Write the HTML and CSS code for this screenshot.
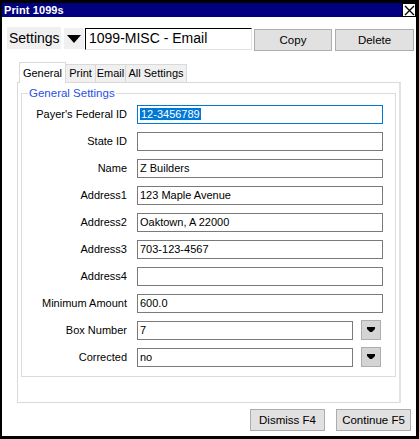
FILE: index.html
```html
<!DOCTYPE html>
<html>
<head>
<meta charset="utf-8">
<link rel="stylesheet" href="styles.css">
</head>
<body>
<div class="window">
  <div class="titlebar">
    <span class="title">Print 1099s</span>
    <span class="close"><svg width="11" height="11" viewBox="0 0 11 11"><path d="M1 1L10 10M10 1L1 10" stroke="#000" stroke-width="1.3"/></svg></span>
  </div>
  <div class="content">
    <div class="toprow">
      <span class="setlabel">Settings</span>
      <span class="arrowbtn"><svg width="14" height="8" viewBox="0 0 14 8"><path d="M0 0H14L7 8Z" fill="#000"/></svg></span>
      <span class="combo">1099-MISC - Email</span>
      <span class="btn copy">Copy</span>
      <span class="btn delete">Delete</span>
    </div>
    <div class="tabs">
      <span class="tab active t-general">General</span>
      <span class="tab t-print">Print</span>
      <span class="tab t-email">Email</span>
      <span class="tab t-all">All Settings</span>
    </div>
    <div class="panel">
      <fieldset class="group">
        <legend>General Settings</legend>
        <div class="rows">
          <label>Payer's Federal ID</label><div class="field focus"><span class="sel">12-3456789</span></div>
          <label>State ID</label><div class="field"></div>
          <label>Name</label><div class="field">Z Builders</div>
          <label>Address1</label><div class="field">123 Maple Avenue</div>
          <label>Address2</label><div class="field">Oaktown, A 22000</div>
          <label>Address3</label><div class="field">703-123-4567</div>
          <label>Address4</label><div class="field"></div>
          <label>Minimum Amount</label><div class="field">600.0</div>
          <label>Box Number</label><div class="selrow"><div class="field short">7</div><span class="ddbtn"><svg width="8" height="6" viewBox="0 0 8 6"><path d="M0 0H8V2L5 5H3L0 2Z" fill="#000"/></svg></span></div>
          <label>Corrected</label><div class="selrow"><div class="field short">no</div><span class="ddbtn"><svg width="8" height="6" viewBox="0 0 8 6"><path d="M0 0H8V2L5 5H3L0 2Z" fill="#000"/></svg></span></div>
        </div>
      </fieldset>
    </div>
    <div class="footer">
      <span class="btn dismiss">Dismiss F4</span>
      <span class="btn continue">Continue F5</span>
    </div>
  </div>
</div>
</body>
</html>
```
FILE: styles.css
```css
* { box-sizing: border-box; }
html, body { margin: 0; padding: 0; background: #000; }
body { font-family: "Liberation Sans", Arial, sans-serif; font-size: 11px; color: #000; }
.window {
  width: 419px; height: 439px;
  background: #fff;
  border-style: solid; border-color: #000;
  border-width: 3px 3px 3px 2px;
  display: flex; flex-direction: column;
}
.titlebar {
  height: 14px; background: #000080;
  display: flex; align-items: center; justify-content: space-between;
  padding-left: 2px;
}
.title { color: #fff; font-weight: bold; font-size: 11px; letter-spacing: 0.1px; }
.close {
  width: 14px; height: 14px; background: #fff; border: 1px solid #000;
  display: flex; align-items: center; justify-content: center;
}
.content { flex: 1; padding: 10px 0 0 0; }
.toprow { display: flex; align-items: flex-start; height: 23px; padding-left: 5px; }
.setlabel {
  width: 54px; height: 22px; background: #f0f0f0;
  font-size: 14px; line-height: 22px; padding-left: 2px;
}
.arrowbtn {
  width: 20px; height: 21px; margin-left: 3px; margin-top: 1px; background: #f0f0f0;
  display: flex; align-items: center; justify-content: center;
}
.combo {
  width: 167px; height: 22px; margin-left: 1px; margin-top: 1px;
  border-top: 1px solid #000; border-left: 1px solid #000;
  border-bottom: 1px solid #e3e3e3; border-right: 1px solid #e3e3e3;
  font-size: 14px; line-height: 19px; padding-left: 3px;
}
.btn {
  height: 22px; background: #e1e1e1; border: 1px solid #adadad;
  display: flex; align-items: center; justify-content: center;
  font-size: 11.5px;
}
.copy { width: 78px; margin-left: 2px; margin-top: 2px; }
.delete { width: 79px; margin-left: 3px; margin-top: 2px; }
.tabs { display: flex; align-items: flex-end; height: 21px; margin-top: 11px; padding-left: 17px; }
.tab {
  flex: none; height: 18px; background: #f0f0f0; border: 1px solid #d9d9d9; border-bottom: none;
  padding: 0; font-size: 11px; line-height: 17px; margin-left: -1px; text-align: center;
}
.tab.active { height: 21px; background: #fff; line-height: 21px; margin-left: 0; z-index: 1; position: relative; top: 1px; }
.t-general { width: 47px; }
.t-print { width: 31px; }
.t-email { width: 31px; }
.t-all { width: 62px; }
.panel {
  margin-left: 15px; width: 384px; height: 321px;
  border: 1px solid #d9d9d9; border-right: 2px solid #e3e3e3;
  padding: 4px 3px 0 3px;
}
.group {
  margin: 0; border: 1px solid #dcdcdc; height: 290px;
  padding: 0; width: 375px;
}
.group legend { color: #2850e6; font-size: 11.5px; padding: 0 1px; margin-left: 6px; line-height: 12px; }
.rows {
  display: grid; grid-template-columns: 105px 246px; column-gap: 10px; row-gap: 8px;
  grid-auto-rows: 19px; margin-top: 6px;
}
.rows label { text-align: right; line-height: 19px; font-size: 11px; }
.field {
  height: 19px; border: 1px solid #7a7a7a; padding-left: 2px; line-height: 17px; font-size: 11px;
  white-space: nowrap;
}
.field.focus { border-color: #0078d7; }
.sel { background: #0078d7; color: #fff; padding: 0 1px; }
.selrow { display: flex; align-items: flex-start; }
.field.short { width: 216px; }
.ddbtn {
  width: 20px; height: 20px; margin-left: 8px; margin-top: -1px;
  background: #d4d4d4; border: 1px solid #adadad;
  display: flex; align-items: center; justify-content: center;
}
.footer { display: flex; justify-content: flex-end; padding-right: 5px; margin-top: 6px; gap: 11px; }
.dismiss, .continue { width: 75px; height: 22px; }
```
